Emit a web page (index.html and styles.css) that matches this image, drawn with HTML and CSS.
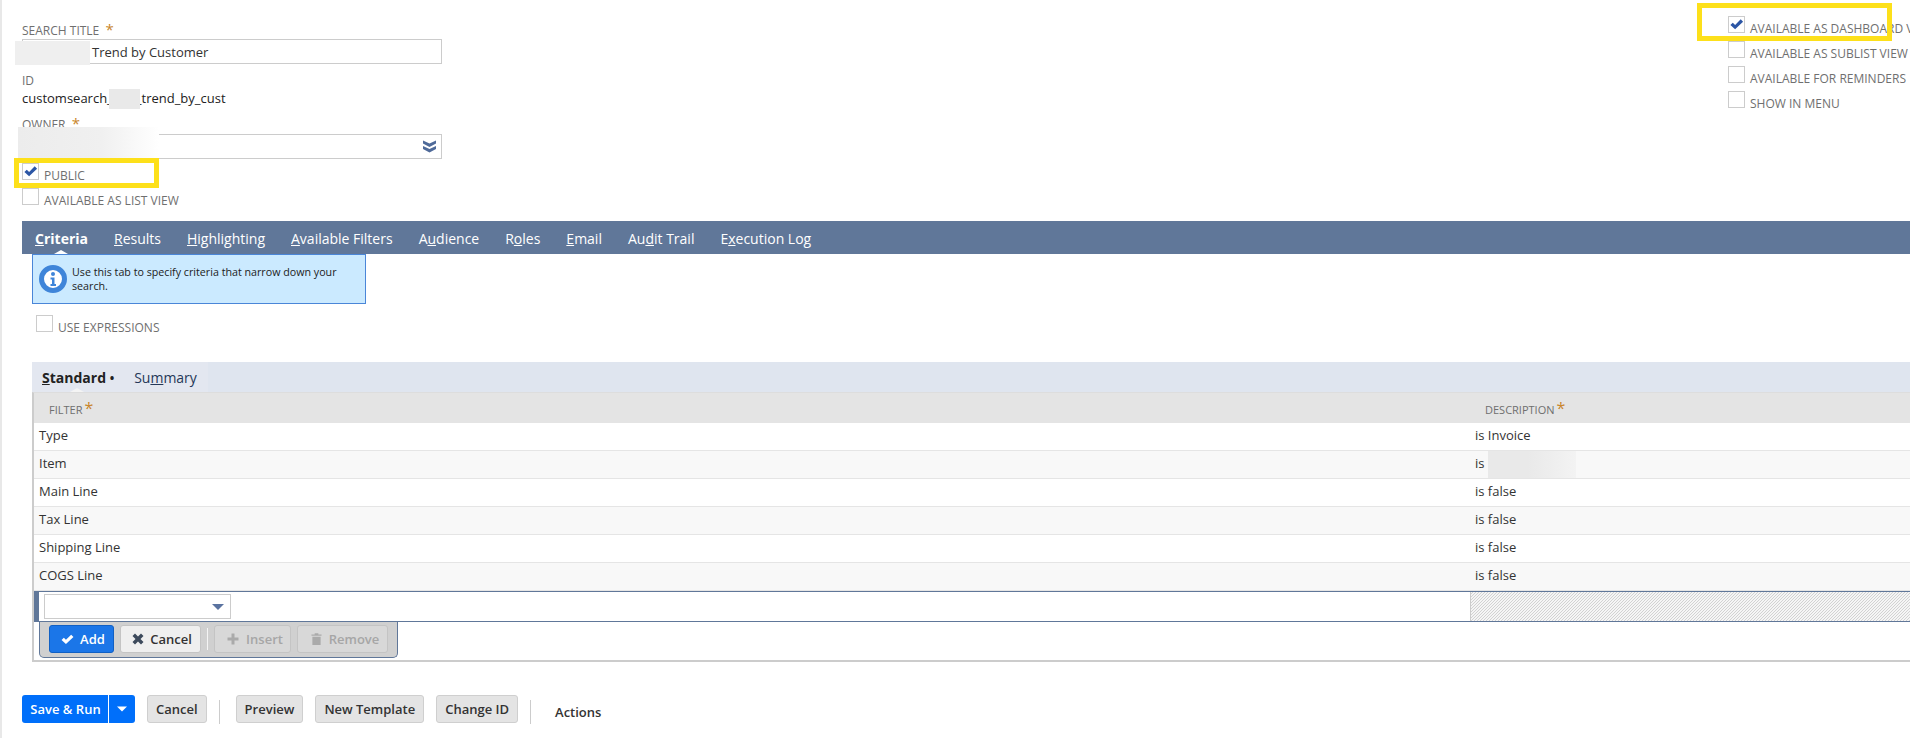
FILE: index.html
```html
<!DOCTYPE html>
<html lang="en">
<head>
<meta charset="utf-8">
<title>Saved Search</title>
<link rel="stylesheet" href="styles.css">
</head>
<body>
<div class="page">
  <div class="top">
    <div class="form-left">
      <div class="label label-title">SEARCH TITLE <span class="req">*</span></div>
      <div class="input"><span class="input-text">Trend by Customer</span></div>
      <div class="label label-id">ID</div>
      <div class="value">customsearch_<span class="spacer-id"></span>_trend_by_cust</div>
      <div class="label label-owner">OWNER <span class="req">*</span></div>
      <div class="input input-owner">
        <svg class="dbl" viewBox="0 0 13 13" width="13" height="13"><path d="M0 0.500 6.500 3.500 13 0.500V3.500L6.500 7 0 3.500Z M0 6 6.500 9 13 6V9L6.500 12.500 0 9Z" fill="#4f6a99"/></svg>
      </div>
      <div class="check-row check-public"><span class="box"><svg viewBox="0 0 16 16" width="15" height="15"><path d="M1.500 8.500 4 6 6.500 8.500 12.500 2.500 15 5 6.500 13Z" fill="#2c56a5"/></svg></span><span class="check-label">PUBLIC</span></div>
      <div class="check-row"><span class="box"></span><span class="check-label">AVAILABLE AS LIST VIEW</span></div>
    </div>
    <div class="form-right">
      <div class="check-row"><span class="box"><svg viewBox="0 0 16 16" width="15" height="15"><path d="M1.500 8.500 4 6 6.500 8.500 12.500 2.500 15 5 6.500 13Z" fill="#2c56a5"/></svg></span><span class="check-label">AVAILABLE AS DASHBOARD VIEW</span></div>
      <div class="check-row"><span class="box"></span><span class="check-label">AVAILABLE AS SUBLIST VIEW</span></div>
      <div class="check-row"><span class="box"></span><span class="check-label">AVAILABLE FOR REMINDERS</span></div>
      <div class="check-row"><span class="box"></span><span class="check-label">SHOW IN MENU</span></div>
    </div>
  </div>

  <nav class="tabs">
    <span class="tab tab-active"><u>C</u>riteria</span>
    <span class="tab"><u>R</u>esults</span>
    <span class="tab"><u>H</u>ighlighting</span>
    <span class="tab"><u>A</u>vailable Filters</span>
    <span class="tab">A<u>u</u>dience</span>
    <span class="tab">R<u>o</u>les</span>
    <span class="tab"><u>E</u>mail</span>
    <span class="tab">Au<u>d</u>it Trail</span>
    <span class="tab">E<u>x</u>ecution Log</span>
  </nav>

  <div class="panel">
    <div class="tip">
      <svg class="tip-icon" viewBox="0 0 28 28" width="28" height="28"><circle cx="14" cy="14" r="11.500" fill="#fff" stroke="#3f85d9" stroke-width="5"/><circle cx="14" cy="9" r="2" fill="#3f85d9"/><path d="M11.500 12.500H15.500V19H17V21H11.500V19H13V14.500H11.500Z" fill="#3f85d9"/></svg>
      <div class="tip-text">Use this tab to specify criteria that narrow down your search.</div>
    </div>
    <div class="check-row check-expr"><span class="box"></span><span class="check-label">USE EXPRESSIONS</span></div>

    <div class="subtabs">
      <div class="subtab-group">
        <span class="subtab subtab-active"><u>S</u>tandard <b class="dot">•</b></span>
        <span class="subtab">Su<u>m</u>mary</span>
      </div>
    </div>

    <div class="grid">
      <div class="row row-head"><div class="cell-a head-a">FILTER<span class="req">*</span></div><div class="cell-b head-b">DESCRIPTION<span class="req">*</span></div></div>
      <div class="row"><div class="cell-a">Type</div><div class="cell-b">is Invoice</div></div>
      <div class="row row-alt"><div class="cell-a">Item</div><div class="cell-b">is</div></div>
      <div class="row"><div class="cell-a">Main Line</div><div class="cell-b">is false</div></div>
      <div class="row row-alt"><div class="cell-a">Tax Line</div><div class="cell-b">is false</div></div>
      <div class="row"><div class="cell-a">Shipping Line</div><div class="cell-b">is false</div></div>
      <div class="row row-alt"><div class="cell-a">COGS Line</div><div class="cell-b">is false</div></div>
      <div class="edit-row">
        <div class="edit-a"><div class="select"><svg viewBox="0 0 12 8" width="12" height="8"><path d="M0 1H12L6 7Z" fill="#5a73a0"/></svg></div></div>
        <div class="edit-b"></div>
      </div>
      <div class="machine">
        <span class="mbtn mbtn-add"><svg viewBox="0 0 14 12" width="13" height="11"><path d="M0.500 6.500 3 4 5.300 6.300 11 0.800 13.500 3.300 5.300 11Z" fill="#fff"/></svg>Add</span>
        <span class="mbtn mbtn-cancel"><svg viewBox="0 0 12 12" width="12" height="12"><path d="M0.500 3 3 0.500 6 3.500 9 0.500 11.500 3 8.500 6 11.500 9 9 11.500 6 8.500 3 11.500 0.500 9 3.500 6Z" fill="#3d4a5c"/></svg>Cancel</span>
        <span class="msep"></span>
        <span class="mbtn mbtn-off"><svg viewBox="0 0 12 12" width="12" height="12"><path d="M4.500 0.500H7.500V4.500H11.500V7.500H7.500V11.500H4.500V7.500H0.500V4.500H4.500Z" fill="#aaa"/></svg>Insert</span>
        <span class="mbtn mbtn-off"><svg viewBox="0 0 12 14" width="11" height="14"><path d="M0.500 2H4V0.800H8V2H11.500V3.500H0.500ZM1.500 4.500H10.500V13.500H1.500Z" fill="#aaa"/></svg>Remove</span>
      </div>
    </div>
  </div>

  <div class="actions">
    <span class="save"><span class="save-main">Save &amp; Run</span><span class="save-drop"><svg viewBox="0 0 10 6" width="10" height="6"><path d="M0 0.500H10L5 5.500Z" fill="#fff"/></svg></span></span>
    <span class="btn">Cancel</span>
    <span class="sep"></span>
    <span class="btn btn-after-sep">Preview</span>
    <span class="btn">New Template</span>
    <span class="btn">Change ID</span>
    <span class="sep"></span>
    <span class="actions-link">Actions</span>
  </div>

  <div class="blur blur-title"></div>
  <div class="blur blur-id"></div>
  <div class="blur blur-owner"></div>
  <div class="blur blur-item"></div>
  <div class="highlight hl-public"></div>
  <div class="highlight hl-dash"></div>
  <div class="triangle tri-main"></div>
  <div class="triangle tri-sub"></div>
</div>
</body>
</html>
```
FILE: styles.css
```css
* { box-sizing: border-box; }
html, body { margin: 0; padding: 0; background: #fff; }
body { font-family: "Open Sans", "Noto Sans", sans-serif; font-size: 13px; color: #262626; overflow: hidden; }
.page { position: relative; width: 1910px; height: 738px; overflow: hidden; border-left: 2px solid #e8e8e8; }

.top { display: flex; justify-content: space-between; height: 221px; }
.form-left { width: 440px; padding: 23px 0 0 20px; }
.form-right { width: 182px; padding-top: 16px; white-space: nowrap; overflow: hidden; }
.form-right .check-row { height: 25px; }

.label { font-size: 12px; line-height: 16px; color: #6f6f6f; }
.req { color: #c9862c; font-size: 15px; line-height: 10px; margin-left: 3px; }
.input { height: 25px; width: 420px; border: 1px solid #ccc; background: #fff; display: flex; align-items: center; }
.input-text { margin-left: 69px; font-size: 13px; color: #333; }
.label-id { margin-top: 9px; }
.value { font-size: 13px; line-height: 18px; color: #222; }
.spacer-id { display: inline-block; width: 23px; height: 1px; }
.label-owner { margin-top: 10px; }
.input-owner { justify-content: flex-end; padding-right: 5px; margin-top: 1px; }

.check-row { display: flex; align-items: flex-start; height: 25px; }
.check-public { margin-top: 4px; }
.box { width: 17px; height: 17px; flex: none; border: 1px solid #ccc; background: #fff; display: flex; align-items: center; justify-content: center; }
.check-label { margin-left: 5px; margin-top: 5px; font-size: 12px; line-height: 16px; color: #6f6f6f; }

.tabs { margin-left: 20px; height: 33px; background: #607799; display: flex; align-items: center; padding: 2px 0 0 13px; gap: 26px; }
.tab { color: #fff; font-size: 14px; line-height: 20px; white-space: nowrap; }
.tab-active { font-weight: 700; }

.panel { padding-left: 30px; }
.tip { width: 334px; height: 50px; border: 1px solid #4a86d8; background: #cbeaff; display: flex; align-items: center; padding-left: 6px; gap: 5px; }
.tip-icon { flex: none; }
.tip-text { font-size: 10.700px; line-height: 14px; color: #1c1c1c; }
.check-expr { margin: 11px 0 0 4px; height: 36px; }

.subtabs { margin-top: 11px; height: 30px; background: #dfe5ef; }
.subtab-group { display: inline-flex; align-items: center; height: 30px; width: 176px; padding-left: 10px; gap: 20px; background: #e3e7f0; }
.subtab { font-size: 14px; color: #253858; white-space: nowrap; }
.subtab-active { font-weight: 700; color: #222; }
.dot { font-weight: 700; font-size: 12px; }

.grid { border-left: 2px solid #ccc; border-bottom: 2px solid #ccc; border-top: 1px solid #ddd; height: 270px; }
.row { display: flex; height: 28px; align-items: center; padding-bottom: 3px; border-bottom: 1px solid #e5e5e5; background: #fff; font-size: 13px; line-height: 18px; color: #333; }
.row-alt { background: #f8f8f8; }
.row-head { height: 30px; padding: 3px 0 0; background: #e4e4e4; border-bottom: 0; font-size: 11px; color: #6f6f6f; }
.cell-a { width: 1436px; padding-left: 5px; flex: none; }
.cell-b { flex: 1; padding-left: 5px; }
.head-a { padding-left: 15px; }
.head-b { padding-left: 15px; }
.head-a .req, .head-b .req { margin-left: 2px; font-size: 16px; }

.edit-row { display: flex; height: 31px; border-top: 1px solid #607799; border-bottom: 1px solid #607799; border-left: 5px solid #607799; }
.edit-a { width: 1431px; flex: none; padding: 2px 0 0 5px; background: #fff; }
.select { width: 187px; height: 25px; border: 1px solid #ccc; display: flex; align-items: center; justify-content: flex-end; padding-right: 6px; }
.edit-b { flex: 1; border-left: 1px solid #ccc; background: linear-gradient(135deg, #f5f5f5 25%, #d2d2d2 25%, #d2d2d2 50%, #f5f5f5 50%, #f5f5f5 75%, #d2d2d2 75%) 0 0 / 3px 3px; }

.machine { margin-left: 5px; width: 359px; height: 36px; background: #d0d0d0; border: 1px solid #607799; border-top: 0; border-radius: 0 0 5px 5px; display: flex; align-items: flex-start; padding: 3px 0 0 9px; gap: 6px; }
.mbtn { height: 28px; padding-left: 3px; border-radius: 3px; border: 1px solid #c4c4c4; display: inline-flex; align-items: center; justify-content: center; gap: 6px; font-size: 13px; font-weight: 600; white-space: nowrap; }
.mbtn-add { width: 65px; background: #1b76e8; border-color: #1160c4; color: #fff; }
.mbtn-cancel { width: 81px; background: #efefef; color: #333; }
.msep { width: 1px; height: 22px; margin-top: 3px; background: #f4f4f4; }
.mbtn-off { width: 77px; padding-left: 5px; gap: 7px; background: #d8d8d8; color: #a6a6a6; }
.mbtn-off:last-child { width: 91px; }

.actions { display: flex; align-items: flex-start; margin: 33px 0 0 20px; gap: 12px; }
.btn { height: 28px; padding: 0 8px; background: #e4e4e4; border: 1px solid #cfcfcf; border-radius: 3px; display: inline-flex; align-items: center; font-size: 13px; font-weight: 600; color: #333; white-space: nowrap; }
.btn-after-sep { margin-left: 4px; }
.save { display: inline-flex; height: 28px; width: 113px; background: #006ffa; border-radius: 3px; color: #fff; font-size: 13px; font-weight: 600; }
.save-main { width: 87px; padding-left: 1px; text-align: center; line-height: 28px; border-right: 1px solid #fff; }
.save-drop { flex: 1; display: flex; align-items: center; justify-content: center; }
.sep { width: 1px; height: 24px; margin-top: 5px; background: #ccc; }
.actions-link { margin: 8px 0 0 12px; font-size: 13px; font-weight: 600; color: #333; }

.blur { position: absolute; background: #efefef; }
.blur-title { left: 13px; top: 41px; width: 75px; height: 24px; }
.blur-id { left: 107px; top: 89px; width: 31px; height: 20px; background: #e9e9e9; }
.blur-owner { left: 16px; top: 127px; width: 141px; height: 31px; background: linear-gradient(90deg, #ececec, #f0f0f0 60%, #fff); }
.blur-item { left: 1486px; top: 451px; width: 88px; height: 27px; background: linear-gradient(90deg, #e9e9e9 45%, #f3f3f3); }
.highlight { position: absolute; border: 5px solid #fde01a; }
.hl-public { left: 12px; top: 158px; width: 145px; height: 30px; }
.hl-dash { left: 1695px; top: 3px; width: 195px; height: 38px; }
.triangle { position: absolute; width: 0; height: 0; border-left: 7px solid transparent; border-right: 7px solid transparent; border-bottom: 4px solid #fff; }
.tri-main { left: 52px; top: 250px; }
.tri-sub { left: 68px; top: 388px; border-bottom-color: #f4f4f4; }
```
